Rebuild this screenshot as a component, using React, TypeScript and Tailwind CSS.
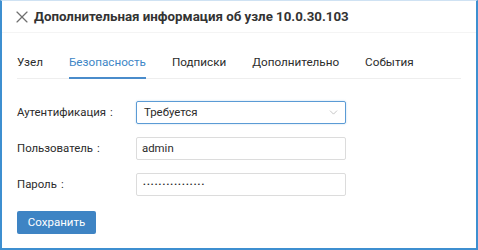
import { X, ChevronDown } from 'lucide-react'

const tabs = ['Узел', 'Безопасность', 'Подписки', 'Дополнительно', 'События']

function Label({ text }: { text: string }) {
  return (
    <span className="w-[119px] shrink-0 text-[11.4px] text-[#2b2b2b]">
      {text}
      <span className="ml-[4px]">:</span>
    </span>
  )
}

export default function App() {
  const active = 1
  return (
    <div
      className="w-[478px] h-[250px] bg-white border-l-2 border-r-2 border-b-2 border-t border-l-[#3d8fd0] border-r-[#3d8fd0] border-b-[#3d8fd0] border-t-[#cfe2f3] overflow-hidden"
      style={{ fontFamily: 'Roboto, "Liberation Sans", sans-serif' }}
    >
      {/* header */}
      <div className="h-[32px] flex items-center pl-[10px] border-b border-[#f4f4f4]">
        <X size={20} strokeWidth={1.4} className="text-[#6f6f6f] mr-[2px]" />
        <span className="text-[13.3px] font-bold text-[#333] pt-[1px]">
          Дополнительная информация об узле 10.0.30.103
        </span>
      </div>

      {/* tabs */}
      <div className="mx-[15px] mt-[16px] flex gap-[26px] border-b border-[#eeeeee] h-[30px]">
        {tabs.map((t, i) => (
          <div
            key={t}
            className={
              i === active
                ? 'text-[11.7px] text-[#3d86c6] border-b-2 border-[#4a8ccb] -mb-px flex items-center pb-[1px]'
                : 'text-[11.7px] text-[#2b2b2b] flex items-center pb-[1px]'
            }
          >
            {t}
          </div>
        ))}
      </div>

      {/* form */}
      <div className="px-[15px] pt-[22px] flex flex-col gap-[13px]">
        <div className="flex items-center">
          <Label text="Аутентификация" />
          <div className="w-[210px] h-[23px] border border-[#5b9bd5] rounded-[2px] flex items-center justify-between pl-[7px] pr-[5px] shadow-[0_0_2px_rgba(91,155,213,0.4)]">
            <span className="text-[11.4px] text-[#2b2b2b]">Требуется</span>
            <ChevronDown size={13} strokeWidth={1.25} className="text-[#aaa]" />
          </div>
        </div>
        <div className="flex items-center">
          <Label text="Пользователь" />
          <div className="w-[210px] h-[23px] border border-[#dcdcdc] rounded-[2px] flex items-center pl-[5px]">
            <span className="text-[11.4px] text-[#2b2b2b]">admin</span>
          </div>
        </div>
        <div className="flex items-center">
          <Label text="Пароль" />
          <div className="w-[210px] h-[23px] border border-[#dcdcdc] rounded-[2px] flex items-center pl-[6px]">
            <span className="text-[8px] text-[#222] tracking-[1.2px] leading-none">••••••••••••••••</span>
          </div>
        </div>
        <div>
          <button className="w-[79px] h-[23px] bg-[#3e84c4] text-white text-[11.5px] rounded-[2px]">
            Сохранить
          </button>
        </div>
      </div>
    </div>
  )
}
